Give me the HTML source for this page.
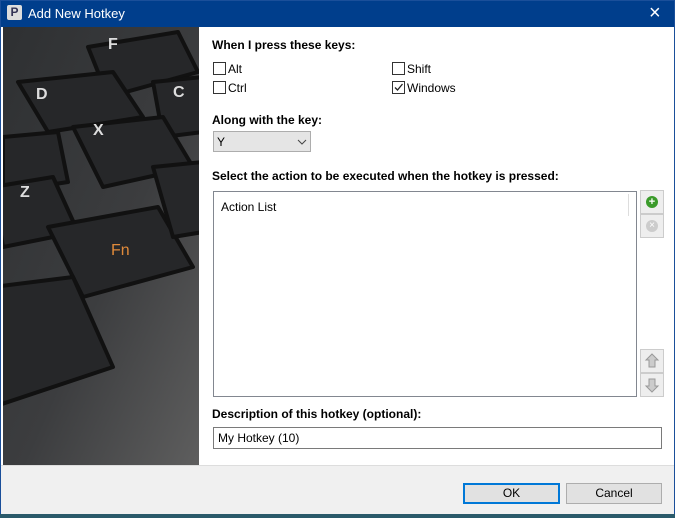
<!DOCTYPE html><html><head><style>
body{margin:0;width:675px;height:518px;overflow:hidden;background:#2a5a6a;font-family:"Liberation Sans",sans-serif;font-size:12px;color:#000}
.win{position:absolute;left:0;top:0;width:673px;height:512px;border:1px solid #1a4f9a;background:#fff}
.title{position:absolute;left:0;top:0;width:673px;height:26px;background:#003e8c;color:#fff;font-size:13px}
.b{position:absolute;font-weight:bold;font-size:12px}
.t{position:absolute}
.cb{position:absolute;width:11px;height:11px;border:1px solid #333;background:#fff}
.foot{position:absolute;left:0;top:464px;width:673px;height:48px;background:#f0f0f0;border-top:1px solid #ddd}
.btn{position:absolute;height:19px;background:#e1e1e1;border:1px solid #adadad;text-align:center;line-height:19px}
</style></head><body>
<div class="win">
<div class="title"><div style="position:absolute;left:6px;top:4px;width:15px;height:15px;background:#ddd;border-radius:2px;color:#335;font-weight:bold;font-size:12px;line-height:15px;text-align:center">P</div><span style="position:absolute;left:27px;top:5px">Add New Hotkey</span><span style="position:absolute;left:648px;top:1px;font-size:20px">×</span></div>
<svg style="position:absolute;left:2px;top:26px" width="196" height="438" viewBox="0 0 196 438">
<defs><linearGradient id="g" x1="0" y1="0" x2="1" y2="1"><stop offset="0" stop-color="#2e3032"/><stop offset=".55" stop-color="#3c3d3f"/><stop offset="1" stop-color="#5e5e5e"/></linearGradient></defs>
<rect width="196" height="438" fill="url(#g)"/>
<g fill="#262729" stroke="#111" stroke-width="4" stroke-linejoin="round">
<path d="M85 20 l90 -15 l20 40 l-90 25 z"/><path d="M15 55 l95 -10 l30 45 l-95 15 z"/>
<path d="M150 55 l50 -5 l0 55 l-40 5 z"/><path d="M70 100 l90 -10 l30 50 l-90 20 z"/>
<path d="M0 110 l55 -5 l10 50 l-65 10 z"/><path d="M-10 160 l60 -10 l25 55 l-75 15 z"/>
<path d="M45 200 l110 -20 l35 60 l-110 30 z"/><path d="M-10 260 l80 -10 l40 90 l-120 40 z"/>
<path d="M150 140 l50 -5 l0 70 l-30 5 z"/></g>
<g fill="#ddd" font-family="Liberation Sans" font-weight="bold" font-size="16"><text x="105" y="22">F</text><text x="33" y="72">D</text><text x="90" y="108">X</text><text x="170" y="70">C</text><text x="17" y="170">Z</text></g>
<text x="108" y="228" fill="#e08a3a" font-family="Liberation Sans" font-size="16">Fn</text>
</svg>
<div class="b" style="left:211px;top:37px">When I press these keys:</div>
<div class="cb" style="left:212px;top:61px"></div><div class="t" style="left:227px;top:61px">Alt</div>
<div class="cb" style="left:212px;top:80px"></div><div class="t" style="left:227px;top:80px">Ctrl</div>
<div class="cb" style="left:391px;top:61px"></div><div class="t" style="left:406px;top:61px">Shift</div>
<div class="cb" style="left:391px;top:80px"><svg width="11" height="11" style="position:absolute"><path d="M2 5.5 L4.5 8 L9.5 2" stroke="#222" stroke-width="1.3" fill="none"/></svg></div><div class="t" style="left:406px;top:80px">Windows</div>
<div class="b" style="left:211px;top:112px">Along with the key:</div>
<div style="position:absolute;left:212px;top:130px;width:96px;height:19px;background:#e5e5e5;border:1px solid #adadad"><span style="position:absolute;left:3px;top:3px">Y</span><svg style="position:absolute;left:83px;top:7px" width="10" height="6"><path d="M1 1 L5 5 L9 1" stroke="#444" fill="none"/></svg></div>
<div class="b" style="left:211px;top:168px">Select the action to be executed when the hotkey is pressed:</div>
<div style="position:absolute;left:212px;top:190px;width:422px;height:204px;border:1px solid #828790"><span style="position:absolute;left:7px;top:8px">Action List</span><div style="position:absolute;left:414px;top:2px;width:1px;height:22px;background:#ddd"></div></div>
<div style="position:absolute;left:639px;top:189px;width:22px;height:22px;background:#eee;border:1px solid #ccc"><div style="position:absolute;left:5px;top:5px;width:12px;height:12px;border-radius:50%;background:#3b9b2b;color:#fff;font-weight:bold;font-size:11px;line-height:12px;text-align:center">+</div></div>
<div style="position:absolute;left:639px;top:213px;width:22px;height:22px;background:#eee;border:1px solid #ccc"><div style="position:absolute;left:5px;top:5px;width:12px;height:12px;border-radius:50%;background:#ccc;color:#fff;font-size:10px;line-height:12px;text-align:center">×</div></div>
<div style="position:absolute;left:639px;top:348px;width:22px;height:22px;background:#eee;border:1px solid #ccc"><svg width="22" height="22"><path d="M11 4 L17 10 L14 10 L14 17 L8 17 L8 10 L5 10 Z" fill="#ccc" stroke="#999"/></svg></div>
<div style="position:absolute;left:639px;top:372px;width:22px;height:22px;background:#eee;border:1px solid #ccc"><svg width="22" height="22"><path d="M11 18 L17 12 L14 12 L14 5 L8 5 L8 12 L5 12 Z" fill="#ccc" stroke="#999"/></svg></div>
<div class="b" style="left:211px;top:406px">Description of this hotkey (optional):</div>
<div style="position:absolute;left:212px;top:426px;width:447px;height:20px;border:1px solid #7a7a7a"><span style="position:absolute;left:4px;top:3px">My Hotkey (10)</span></div>
<div class="foot">
<div class="btn" style="left:462px;top:17px;width:93px;border:2px solid #0078d7;height:17px;line-height:17px">OK</div>
<div class="btn" style="left:565px;top:17px;width:94px">Cancel</div>
</div>
</div>
</body></html>
